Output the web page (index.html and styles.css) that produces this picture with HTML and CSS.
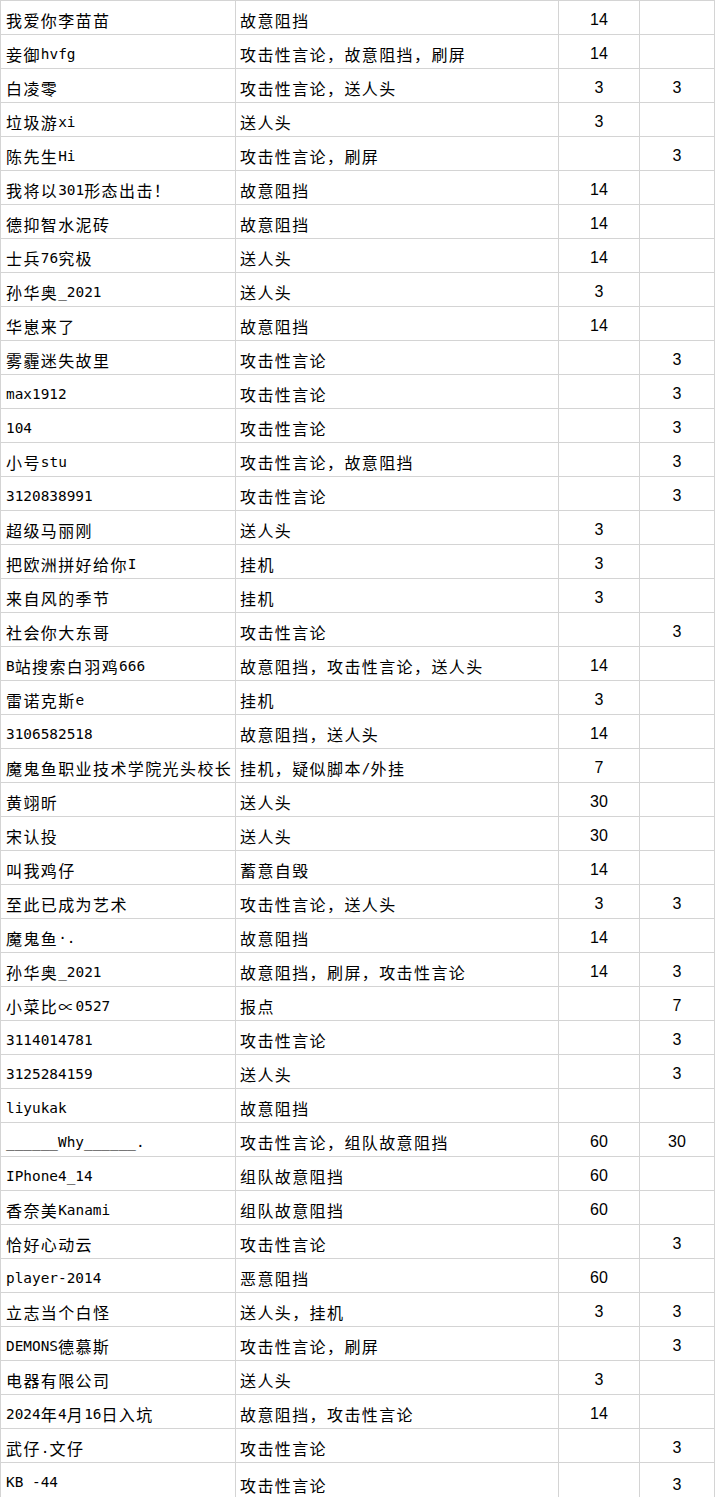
FILE: index.html
```html
<!DOCTYPE html>
<html lang="zh-CN">
<head>
<meta charset="utf-8">
<title>举报记录</title>
<link rel="stylesheet" href="styles.css">
</head>
<body>
<div class="sheet">
  <div class="row"><div class="c name">我爱你李苗苗</div><div class="c why">故意阻挡</div><div class="c num">14</div><div class="c num"></div></div>
  <div class="row"><div class="c name">妾御<span class="m">hvfg</span></div><div class="c why">攻击性言论，故意阻挡，刷屏</div><div class="c num">14</div><div class="c num"></div></div>
  <div class="row"><div class="c name">白凌零</div><div class="c why">攻击性言论，送人头</div><div class="c num">3</div><div class="c num">3</div></div>
  <div class="row"><div class="c name">垃圾游<span class="m">xi</span></div><div class="c why">送人头</div><div class="c num">3</div><div class="c num"></div></div>
  <div class="row"><div class="c name">陈先生<span class="m">Hi</span></div><div class="c why">攻击性言论，刷屏</div><div class="c num"></div><div class="c num">3</div></div>
  <div class="row"><div class="c name">我将以<span class="m">301</span>形态出击！</div><div class="c why">故意阻挡</div><div class="c num">14</div><div class="c num"></div></div>
  <div class="row"><div class="c name">德抑智水泥砖</div><div class="c why">故意阻挡</div><div class="c num">14</div><div class="c num"></div></div>
  <div class="row"><div class="c name">士兵<span class="m">76</span>究极</div><div class="c why">送人头</div><div class="c num">14</div><div class="c num"></div></div>
  <div class="row"><div class="c name">孙华奥<span class="m">_2021</span></div><div class="c why">送人头</div><div class="c num">3</div><div class="c num"></div></div>
  <div class="row"><div class="c name">华崽来了</div><div class="c why">故意阻挡</div><div class="c num">14</div><div class="c num"></div></div>
  <div class="row"><div class="c name">雾霾迷失故里</div><div class="c why">攻击性言论</div><div class="c num"></div><div class="c num">3</div></div>
  <div class="row"><div class="c name"><span class="m">max1912</span></div><div class="c why">攻击性言论</div><div class="c num"></div><div class="c num">3</div></div>
  <div class="row"><div class="c name"><span class="m">104</span></div><div class="c why">攻击性言论</div><div class="c num"></div><div class="c num">3</div></div>
  <div class="row"><div class="c name">小号<span class="m">stu</span></div><div class="c why">攻击性言论，故意阻挡</div><div class="c num"></div><div class="c num">3</div></div>
  <div class="row"><div class="c name"><span class="m">3120838991</span></div><div class="c why">攻击性言论</div><div class="c num"></div><div class="c num">3</div></div>
  <div class="row"><div class="c name">超级马丽刚</div><div class="c why">送人头</div><div class="c num">3</div><div class="c num"></div></div>
  <div class="row"><div class="c name">把欧洲拼好给你<span class="m">I</span></div><div class="c why">挂机</div><div class="c num">3</div><div class="c num"></div></div>
  <div class="row"><div class="c name">来自风的季节</div><div class="c why">挂机</div><div class="c num">3</div><div class="c num"></div></div>
  <div class="row"><div class="c name">社会你大东哥</div><div class="c why">攻击性言论</div><div class="c num"></div><div class="c num">3</div></div>
  <div class="row"><div class="c name"><span class="m">B</span>站搜索白羽鸡<span class="m">666</span></div><div class="c why">故意阻挡，攻击性言论，送人头</div><div class="c num">14</div><div class="c num"></div></div>
  <div class="row"><div class="c name">雷诺克斯<span class="m">e</span></div><div class="c why">挂机</div><div class="c num">3</div><div class="c num"></div></div>
  <div class="row"><div class="c name"><span class="m">3106582518</span></div><div class="c why">故意阻挡，送人头</div><div class="c num">14</div><div class="c num"></div></div>
  <div class="row"><div class="c name">魔鬼鱼职业技术学院光头校长</div><div class="c why">挂机，疑似脚本<span class="m">/</span>外挂</div><div class="c num">7</div><div class="c num"></div></div>
  <div class="row"><div class="c name">黄翊昕</div><div class="c why">送人头</div><div class="c num">30</div><div class="c num"></div></div>
  <div class="row"><div class="c name">宋认投</div><div class="c why">送人头</div><div class="c num">30</div><div class="c num"></div></div>
  <div class="row"><div class="c name">叫我鸡仔</div><div class="c why">蓄意自毁</div><div class="c num">14</div><div class="c num"></div></div>
  <div class="row"><div class="c name">至此已成为艺术</div><div class="c why">攻击性言论，送人头</div><div class="c num">3</div><div class="c num">3</div></div>
  <div class="row"><div class="c name">魔鬼鱼<span class="m">·.</span></div><div class="c why">故意阻挡</div><div class="c num">14</div><div class="c num"></div></div>
  <div class="row"><div class="c name">孙华奥<span class="m">_2021</span></div><div class="c why">故意阻挡，刷屏，攻击性言论</div><div class="c num">14</div><div class="c num">3</div></div>
  <div class="row"><div class="c name">小菜比∝<span class="m">0527</span></div><div class="c why">报点</div><div class="c num"></div><div class="c num">7</div></div>
  <div class="row"><div class="c name"><span class="m">3114014781</span></div><div class="c why">攻击性言论</div><div class="c num"></div><div class="c num">3</div></div>
  <div class="row"><div class="c name"><span class="m">3125284159</span></div><div class="c why">送人头</div><div class="c num"></div><div class="c num">3</div></div>
  <div class="row"><div class="c name"><span class="m">liyukak</span></div><div class="c why">故意阻挡</div><div class="c num"></div><div class="c num"></div></div>
  <div class="row"><div class="c name"><span class="m">______Why______.</span></div><div class="c why">攻击性言论，组队故意阻挡</div><div class="c num">60</div><div class="c num">30</div></div>
  <div class="row"><div class="c name"><span class="m">IPhone4_14</span></div><div class="c why">组队故意阻挡</div><div class="c num">60</div><div class="c num"></div></div>
  <div class="row"><div class="c name">香奈美<span class="m">Kanami</span></div><div class="c why">组队故意阻挡</div><div class="c num">60</div><div class="c num"></div></div>
  <div class="row"><div class="c name">恰好心动云</div><div class="c why">攻击性言论</div><div class="c num"></div><div class="c num">3</div></div>
  <div class="row"><div class="c name"><span class="m">player-2014</span></div><div class="c why">恶意阻挡</div><div class="c num">60</div><div class="c num"></div></div>
  <div class="row"><div class="c name">立志当个白怪</div><div class="c why">送人头，挂机</div><div class="c num">3</div><div class="c num">3</div></div>
  <div class="row"><div class="c name"><span class="m">DEMONS</span>德慕斯</div><div class="c why">攻击性言论，刷屏</div><div class="c num"></div><div class="c num">3</div></div>
  <div class="row"><div class="c name">电器有限公司</div><div class="c why">送人头</div><div class="c num">3</div><div class="c num"></div></div>
  <div class="row"><div class="c name"><span class="m">2024</span>年<span class="m">4</span>月<span class="m">16</span>日入坑</div><div class="c why">故意阻挡，攻击性言论</div><div class="c num">14</div><div class="c num"></div></div>
  <div class="row"><div class="c name">武仔<span class="m">.</span>文仔</div><div class="c why">攻击性言论</div><div class="c num"></div><div class="c num">3</div></div>
  <div class="row"><div class="c name"><span class="m">KB -44</span></div><div class="c why low">攻击性言论</div><div class="c num low"></div><div class="c num low">3</div></div>
</div>
</body>
</html>
```

FILE: styles.css
```css
html, body {
  margin: 0;
  padding: 0;
  background: #ffffff;
}

.sheet {
  display: flex;
  flex-direction: column;
  gap: 1px;
  padding: 1px;
  background: #d4d4d4;
  width: 713px;
}

.row {
  display: grid;
  grid-template-columns: 234px 322px 80px 74px;
  gap: 1px;
  height: 33px;
}

.c {
  background: #ffffff;
  color: #000000;
  display: flex;
  align-items: center;
  padding-top: 4px;
  box-sizing: border-box;
  white-space: nowrap;
  overflow: hidden;
}

.name, .why {
  font-family: "Noto Sans CJK SC", "Noto Sans", sans-serif;
  font-size: 16px;
  letter-spacing: 1.4px;
  padding-left: 5px;
}

.why {
  padding-left: 4px;
}

.m {
  font-family: "DejaVu Sans Mono", "Liberation Mono", monospace;
  font-size: 14.4px;
  letter-spacing: 0;
  white-space: pre;
}

.num {
  font-family: "Liberation Sans", Arial, sans-serif;
  font-size: 16px;
  justify-content: center;
}

.low {
  padding-top: 10px;
  overflow: visible;
}
```
